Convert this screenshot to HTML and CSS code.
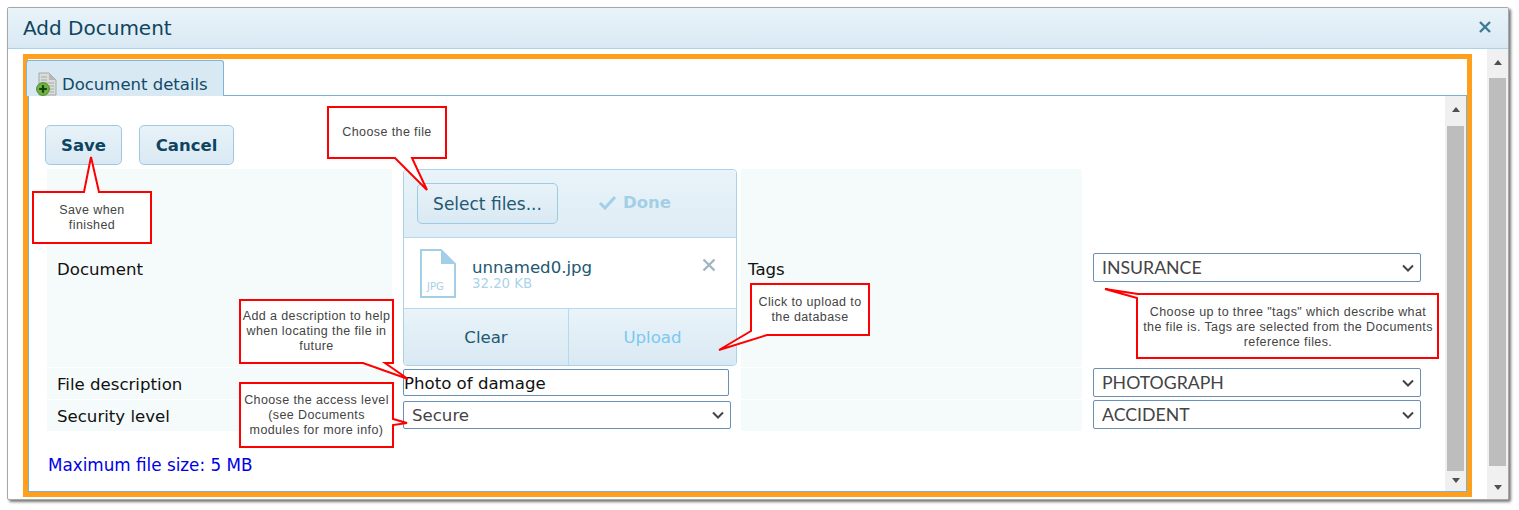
FILE: index.html
```html
<!DOCTYPE html>
<html lang="en">
<head>
<meta charset="utf-8">
<title>Add Document</title>
<link rel="stylesheet" href="styles.css">
</head>
<body>
<div class="window">
  <header class="titlebar">
    <h1 class="title">Add Document</h1>
    <svg class="close" width="14" height="14" viewBox="0 0 14 14"><path d="M2 2 L12 12 M12 2 L2 12" fill="none" stroke="#3f7a96" stroke-width="2.4"/></svg>
  </header>
  <div class="window-body">
    <main class="outer-main">
      <div class="frame">
        <div class="tab">
          <svg class="tab-icon" width="22" height="24" viewBox="0 0 22 24">
            <path d="M3 1 H13 L20 8 V23 H3 Z" fill="#d9dcd9" stroke="#a4a9a5"/>
            <path d="M13 1 V8 H20 Z" fill="#b4b9b5"/>
            <path d="M5 5 H11 M5 8 H11 M9 11 H18 M12 14 H18 M14 17 H18 M14 20 H18" stroke="#a9aeaa"/>
            <circle cx="7" cy="17" r="6.4" fill="#6cb33f" stroke="#4e8c28"/>
            <path d="M3.2 17 H10.8 M7 13.2 V20.8" stroke="#1f3d12" stroke-width="2.2"/>
          </svg>
          <span>Document details</span>
        </div>
        <div class="panel">
          <div class="panel-content">
            <div class="actions">
              <button class="btn btn-bold save" type="button">Save</button>
              <button class="btn btn-bold cancel" type="button">Cancel</button>
            </div>
            <div class="form-grid">
              <div class="cell label-cell row-doc">Document</div>
              <div class="upload">
                <div class="upload-head">
                  <button class="btn select-files" type="button">Select files...</button>
                  <span class="done">
                    <svg width="19" height="15" viewBox="0 0 19 15"><path d="M2 8 L7 13 L17 2" fill="none" stroke="#a3cfe6" stroke-width="3"/></svg>
                    Done
                  </span>
                </div>
                <div class="upload-file">
                  <svg class="file-icon" width="36" height="49" viewBox="0 0 36 49">
                    <path d="M1 1 H21 L35 15 V48 H1 Z" fill="#fff" stroke="#a3cfe6" stroke-width="2"/>
                    <path d="M21 1 L35 15 H21 Z" fill="#a3cfe6"/>
                    <text x="7" y="41" class="file-ext">JPG</text>
                  </svg>
                  <div class="file-meta">
                    <div class="file-name">unnamed0.jpg</div>
                    <div class="file-size">32.20 KB</div>
                  </div>
                  <svg class="file-remove" width="14" height="14" viewBox="0 0 14 14"><path d="M1.5 1.5 L12.5 12.5 M12.5 1.5 L1.5 12.5" fill="none" stroke="#a3b5bf" stroke-width="2.4"/></svg>
                </div>
                <div class="upload-foot">
                  <span class="foot-btn foot-clear">Clear</span>
                  <span class="foot-btn foot-upload">Upload</span>
                </div>
              </div>
              <div class="cell tags-cell row-doc">Tags</div>
              <div class="select-cell select-doc"><select class="field tag-select"><option>INSURANCE</option></select></div>

              <div class="cell label-cell">File description</div>
              <div class="input-cell"><input class="text-input" type="text" value="Photo of damage"></div>
              <div class="cell tags-cell"></div>
              <div class="select-cell"><select class="field tag-select"><option>PHOTOGRAPH</option></select></div>

              <div class="cell label-cell">Security level</div>
              <div class="input-cell"><select class="field security-select"><option>Secure</option></select></div>
              <div class="cell tags-cell"></div>
              <div class="select-cell"><select class="field tag-select"><option>ACCIDENT</option></select></div>
            </div>
            <p class="max-size">Maximum file size: 5 MB</p>
          </div>
          <div class="scrollbar inner-scroll">
            <span class="arrow arrow-up"></span>
            <span class="thumb"></span>
            <span class="arrow arrow-down"></span>
          </div>
        </div>
      </div>
    </main>
    <div class="scrollbar outer-scroll">
      <span class="arrow arrow-up"></span>
      <span class="thumb"></span>
      <span class="arrow arrow-down"></span>
    </div>
  </div>
</div>

<svg class="callout-shapes" width="1519" height="510" viewBox="0 0 1519 510">
  <path d="M33 192 H84 L91 157 L99 192 H151 V243 H33 Z"/>
  <path d="M328 107 H446 V158 H412 L427 190 L395 158 H328 Z"/>
  <path d="M751 284 H869 V335 H767 L719 350 L751 331 Z"/>
  <path d="M240 300 H393 V363 H385 L408 379 L363 363 H240 Z"/>
  <path d="M240 383 H393 V419 L407 423 L393 425 V447 H240 Z"/>
  <path d="M1137 294 H1438 V358 H1137 V298 L1105 289 L1138 294 Z"/>
</svg>
<div class="note note-save">Save when<br>finished</div>
<div class="note note-file">Choose the file</div>
<div class="note note-upload">Click to upload to<br>the database</div>
<div class="note note-desc">Add a description to help<br>when locating the file in<br>future</div>
<div class="note note-access">Choose the access level<br>(see Documents<br>modules for more info)</div>
<div class="note note-tags">Choose up to three "tags" which describe what<br>the file is. Tags are selected from the Documents<br>reference files.</div>
</body>
</html>
```

FILE: styles.css
```css
* { box-sizing: border-box; }
html, body { margin: 0; padding: 0; }
body {
  position: relative;
  width: 1519px;
  height: 510px;
  overflow: hidden;
  background: #fff;
  padding: 7px 0 0 7px;
  font-family: "DejaVu Sans", sans-serif;
}
.window {
  width: 1502px;
  height: 493px;
  border: 1px solid #a8a8a8;
  border-radius: 2px;
  background: #fff;
  box-shadow: 2px 2px 3px #777;
  display: flex;
  flex-direction: column;
}
.titlebar {
  height: 41px;
  flex: none;
  display: flex;
  align-items: center;
  justify-content: space-between;
  padding: 0 16px 0 15px;
  background: linear-gradient(#e9f3f9, #d9e9f3);
  border-bottom: 1px solid #a9d3ea;
}
.title {
  margin: 0;
  font-size: 20px;
  font-weight: 400;
  color: #0f4560;
}
.close { margin-bottom: 2px; }
.window-body { flex: 1; display: flex; min-height: 0; }
.outer-main { flex: 1; min-width: 0; padding: 5px 15px 3px 15px; }
.frame {
  height: 443px;
  border: 5px solid #ff9f1c;
  display: flex;
  flex-direction: column;
}
.tab {
  flex: none;
  width: 198px;
  height: 36px;
  margin: 1px 0 0 -2px;
  padding: 11px 0 0 9px;
  display: flex;
  align-items: flex-start;
  gap: 4px;
  background: #d8e9f3;
  border: 1px solid #7fb6d6;
  border-bottom: 0;
  border-radius: 3px 3px 0 0;
  font-size: 16.5px;
  color: #114a68;
  position: relative;
  overflow: hidden;
}
.tab span { padding-top: 3px; }
.tab-icon { flex: none; }
.panel {
  flex: 1;
  min-height: 0;
  margin-top: -1px;
  display: flex;
  border: 1px solid #74b3d6;
  background: #fff;
}
.panel-content { flex: 1; min-width: 0; padding: 29px 0 0 16px; }
.actions { display: flex; gap: 17px; height: 40px; margin-bottom: 4px; }
.btn {
  font-family: "DejaVu Sans", sans-serif;
  color: #0e4461;
  background: linear-gradient(#e8f2f8, #d9e9f3);
  border: 1px solid #9ccbe4;
  border-radius: 5px;
  padding: 0;
}
.btn-bold { font-weight: 700; font-size: 16.5px; }
.save { width: 77px; }
.cancel { width: 95px; }
.form-grid {
  margin-left: 2px;
  display: grid;
  grid-template-columns: 345px 345px 345px 1fr;
  grid-template-rows: 198px 31px 31px;
  row-gap: 1px;
}
.cell {
  background: #f5fafa;
  font-size: 16.6px;
  color: #111;
  display: flex;
  align-items: center;
  padding-top: 2px;
}
.label-cell { padding-left: 10px; }
.tags-cell { padding-left: 7px; margin-left: 4px; }
.upload {
  margin-left: 11px;
  width: 334px;
  height: 197px;
  display: flex;
  flex-direction: column;
  border: 1px solid #a9d3ea;
  border-radius: 4px;
  overflow: hidden;
  background: #fff;
}
.upload-head {
  height: 68px;
  flex: none;
  padding: 13px 0 0 13px;
  display: flex;
  align-items: flex-start;
  background: linear-gradient(#e9f3f9, #deecf5);
  border-bottom: 1px solid #b5daee;
}
.select-files {
  width: 141px;
  height: 41px;
  font-size: 17px;
  color: #225872;
}
.done {
  margin: 10px 0 0 40px;
  display: inline-flex;
  align-items: center;
  gap: 6px;
  font-size: 16.5px;
  font-weight: 700;
  color: #a3cfe6;
}
.upload-file {
  height: 71px;
  flex: none;
  padding: 0 20px 0 16px;
  display: flex;
  align-items: center;
  border-bottom: 1px solid #b5daee;
}
.file-ext { font-size: 10px; font-family: "DejaVu Sans", sans-serif; fill: #a3cfe6; }
.file-meta { flex: 1; margin-left: 16px; padding-top: 5px; }
.file-name { font-size: 16.6px; line-height: 16px; color: #225872; }
.file-size { font-size: 13.3px; line-height: 16px; color: #a9d3ea; }
.file-remove { flex: none; margin-bottom: 16px; }
.upload-foot { flex: 1; display: flex; background: linear-gradient(#e9f3f9, #d9e9f3); }
.foot-btn {
  display: flex;
  align-items: center;
  justify-content: center;
  padding-top: 1px;
  font-size: 16.6px;
}
.foot-clear { width: 165px; color: #225872; border-right: 1px solid #b5daee; }
.foot-upload { flex: 1; color: #7cc8f0; }
.input-cell { margin-left: 11px; padding-top: 1px; display: flex; align-items: flex-start; }
.select-cell { padding-left: 11px; display: flex; align-items: flex-start; }
.select-doc { padding-top: 84px; }
.field {
  appearance: none;
  -webkit-appearance: none;
  height: 29px;
  font-family: "Lato", sans-serif;
  font-size: 17.7px;
  color: #444;
  background: #fff url("data:image/svg+xml,%3Csvg xmlns='http://www.w3.org/2000/svg' width='12' height='8' viewBox='0 0 12 8'%3E%3Cpath d='M1 1.5 L6 6.5 L11 1.5' fill='none' stroke='%23444' stroke-width='2'/%3E%3C/svg%3E") no-repeat right 6px center;
  border: 1px solid #6a8fb5;
  border-radius: 2px;
  padding-left: 8px;
}
.tag-select { width: 328px; }
.security-select { width: 328px; height: 28px; font-family: "DejaVu Sans", sans-serif; font-size: 16.6px; }
.text-input {
  width: 326px;
  height: 27px;
  font-family: "DejaVu Sans", sans-serif;
  font-size: 16.6px;
  color: #111;
  border: 1px solid #6a8fb5;
  border-radius: 2px;
  padding: 1px 0 0;
}
.max-size {
  margin: 24px 0 0 3px;
  font-size: 16.8px;
  line-height: 20px;
  color: #0000e6;
}
.scrollbar {
  flex: none;
  width: 21px;
  background: #f0f0f0;
  display: flex;
  flex-direction: column;
  align-items: center;
}
.thumb { width: 17px; flex: 1; background: #bdbdbd; }
.arrow { flex: none; width: 0; height: 0; border-left: 4.5px solid transparent; border-right: 4.5px solid transparent; }
.arrow-up { border-bottom: 5px solid #505050; margin: 11px 0 14px; }
.arrow-down { border-top: 5px solid #505050; margin: 7px 0 8px; }
.outer-scroll .arrow-up { margin-bottom: 13px; }
.outer-scroll .arrow-down { margin: 19px 0 9px; }
.callout-shapes { position: absolute; left: 0; top: 0; pointer-events: none; }
.callout-shapes path { fill: #fff; stroke: #f00; stroke-width: 2; stroke-linejoin: miter; }
.note {
  position: absolute;
  display: flex;
  align-items: center;
  justify-content: center;
  text-align: center;
  font-family: "Liberation Sans", sans-serif;
  font-size: 12.5px;
  letter-spacing: 0.4px;
  line-height: 15px;
  color: #444;
}
.note-save { left: 34px; top: 193px; width: 116px; height: 49px; }
.note-file { left: 330px; top: 108px; width: 114px; height: 49px; }
.note-upload { left: 753px; top: 285px; width: 114px; height: 49px; }
.note-desc { left: 240px; top: 300px; width: 153px; height: 62px; }
.note-access { left: 240px; top: 384px; width: 153px; height: 62px; }
.note-tags { left: 1138px; top: 296px; width: 300px; height: 62px; }
```
